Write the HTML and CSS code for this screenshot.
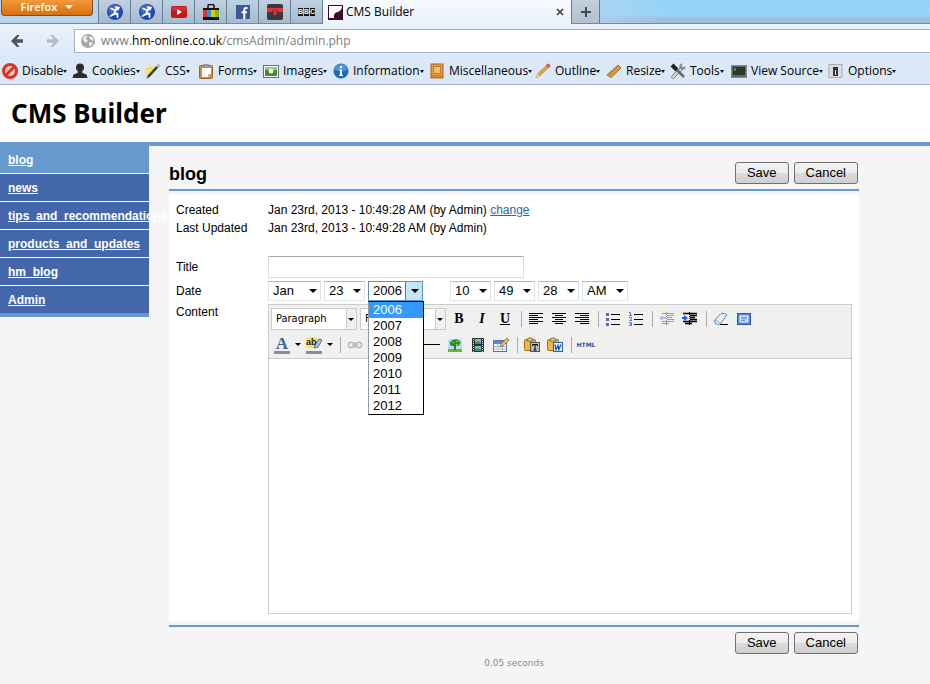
FILE: index.html
```html
<!DOCTYPE html>
<html lang="en">
<head>
<meta charset="utf-8">
<title>CMS Builder</title>
<link rel="stylesheet" href="styles.css">
</head>
<body>
<div class="browser">
  <div class="tabstrip">
    <button class="firefox" type="button">Firefox <i class="tri light"></i></button>
    <div class="tabs">
      <button class="tab" type="button" aria-label="Pinned tab"><svg width="16" height="16" viewBox="0 0 16 16"><circle cx="8" cy="8" r="8" fill="#2447ae"/><circle cx="7" cy="6" r="5.5" fill="#4268c9"/><path d="M4 4.500l3.500 1.500 4-1M8.500 6.500L7 10l-3.500 2M7.500 9.500l3 .5 0 3M9 6l3-2.500" stroke="#fff" stroke-width="1.800" fill="none" stroke-linecap="round"/><circle cx="9.500" cy="3.600" r="1.500" fill="#fff"/></svg></button>
      <button class="tab" type="button" aria-label="Pinned tab"><svg width="16" height="16" viewBox="0 0 16 16"><circle cx="8" cy="8" r="8" fill="#2447ae"/><circle cx="7" cy="6" r="5.500" fill="#4268c9"/><path d="M4 4.500l3.500 1.500 4-1M8.500 6.500L7 10l-3.500 2M7.500 9.500l3 .5 0 3M9 6l3-2.500" stroke="#fff" stroke-width="1.800" fill="none" stroke-linecap="round"/><circle cx="9.500" cy="3.600" r="1.500" fill="#fff"/></svg></button>
      <button class="tab" type="button" aria-label="Video"><svg width="16" height="16" viewBox="0 0 16 16"><rect y="2" width="16" height="12" rx="2" fill="#c4161c"/><rect x="1" y="3" width="14" height="4" fill="#cf3034"/><path d="M6 5l5 3-5 3z" fill="#fff"/></svg></button>
      <button class="tab" type="button" aria-label="Shopping"><svg width="16" height="16" viewBox="0 0 16 16"><path d="M5 5V2q0-1.500 1.500-1.500h3Q11 .5 11 2v3" fill="none" stroke="#111" stroke-width="1.500"/><path d="M0 4h16v12H0z" fill="#111"/><path d="M0 6h4v7H0z" fill="#e5322d"/><path d="M4 6h4v7H4z" fill="#1b9bd8"/><path d="M8 6h4v7H8z" fill="#f5c400"/><path d="M12 6h4v7h-4z" fill="#86b817"/></svg></button>
      <button class="tab" type="button" aria-label="Social"><svg width="16" height="16" viewBox="0 0 16 16"><rect x="1" y="1" width="14" height="14" fill="#3b5998"/><path d="M12.500 4H11q-1.700 0-1.700 2v9M6.500 8.200h5.500" stroke="#fff" stroke-width="2" fill="none"/></svg></button>
      <button class="tab" type="button" aria-label="Pinned site"><svg width="16" height="16" viewBox="0 0 16 16"><rect width="16" height="16" rx="2" fill="#3a3a3c"/><path d="M0 4h16v4h-5V6.500H9.500V11h-3V6.500H5V8H0z" fill="#e03039"/></svg></button>
      <button class="tab bbc" type="button"><b>B</b><b>B</b><b>C</b></button>
      <div class="tab active"><svg width="15" height="15" viewBox="0 0 15 15"><rect width="15" height="15" fill="#3d0a2c"/><path d="M1 1h13Q14 6 9.500 7T6 13H1z" fill="#fff"/></svg><span>CMS Builder</span><button class="close" type="button" aria-label="Close tab"><svg width="8" height="8" viewBox="0 0 8 8"><path d="M1 1l6 6M7 1L1 7" stroke="#444" stroke-width="1.700"/></svg></button></div>
      <button class="tab add" type="button" aria-label="New tab"><svg width="10" height="10" viewBox="0 0 10 10"><path d="M5 0v10M0 5h10" stroke="#3f4a56" stroke-width="2"/></svg></button>
    </div>
  </div>
  <div class="navbar">
    <button type="button" aria-label="Back"><svg width="14" height="14" viewBox="0 0 14 14"><path d="M7 1L1 7l6 6h2.500L6.500 8.800H13V5.200H6.500L9.500 1z" fill="#4c545c"/></svg></button>
    <button type="button" aria-label="Forward"><svg width="14" height="14" viewBox="0 0 14 14"><path d="M7 1l6 6-6 6H4.500l3-4.200H1V5.200h6.500L4.500 1z" fill="#b3bac1"/></svg></button>
    <div class="address"><svg width="14" height="14" viewBox="0 0 14 14"><circle cx="7" cy="7" r="7" fill="#a5a5a5"/><path d="M2 3.500L5.500 1l1 2-2 1.500 2.500 2L5 9 2.500 7zM8.500 2l3.500 1.500.8 3.500-2.800-1L8 4zM8 8l4 .5-2.500 4L8 11z" fill="#ececec"/></svg><span>www.<em>hm-online.co.uk</em>/cmsAdmin/admin.php</span></div>
  </div>
  <div class="devbar">
    <button type="button"><svg width="16" height="16" viewBox="0 0 16 16"><circle cx="8" cy="8" r="6.500" fill="#f7c9c2" stroke="#dd3322" stroke-width="3"/><path d="M3.500 12.500l9-9" stroke="#dd3322" stroke-width="3"/></svg>Disable<i class="tri"></i></button>
    <button type="button"><svg width="16" height="16" viewBox="0 0 16 16"><circle cx="8" cy="4.500" r="4" fill="#2c2c2c"/><path d="M6 7h4l.5 3 4 1.500 1 3.500H.5l1-3.500 4-1.500z" fill="#2c2c2c"/></svg>Cookies<i class="tri"></i></button>
    <button type="button"><svg width="16" height="16" viewBox="0 0 16 16"><path d="M5 0l1 4 4-1-2 3 4 2-4 1v4L5 10l-4 2 1-4-2-3 4 0z" fill="#fbe04a"/><path d="M2 15L14 2" stroke="#333" stroke-width="2.500"/><path d="M12 4l2.500-2.500M1 16l2-2" stroke="#bbb" stroke-width="2.500"/></svg>CSS<i class="tri"></i></button>
    <button type="button"><svg width="16" height="16" viewBox="0 0 16 16"><rect x="1.500" y="2.500" width="13" height="13" rx="1" fill="#d28a3c" stroke="#a8621c"/><path d="M4 5h9v6l-3 3H4z" fill="#fff"/><path d="M13 11h-3v3z" fill="#bbb"/><path d="M5 1h6v3H5z" fill="#999"/></svg>Forms<i class="tri"></i></button>
    <button type="button"><svg width="16" height="16" viewBox="0 0 16 16"><rect x=".5" y="2.500" width="15" height="12" fill="#fff" stroke="#667066"/><path d="M2 4h12v9H2z" fill="#3d8b37"/><path d="M2 4h12v3H2z" fill="#8ec4a0"/><circle cx="8" cy="8" r="2.500" fill="#f5f0b0"/></svg>Images<i class="tri"></i></button>
    <button type="button"><svg width="16" height="16" viewBox="0 0 16 16"><circle cx="8" cy="8" r="7.500" fill="#2068b4"/><path d="M1.500 7a6.500 6 0 0 1 13 0q-6 2-13 0" fill="#4a96de"/><path d="M7 3h2v2H7zM6 6.500h3V12h1v1H6v-1h1V7.500H6z" fill="#fff"/></svg>Information<i class="tri"></i></button>
    <button type="button"><svg width="16" height="16" viewBox="0 0 16 16"><rect x="2" y="1" width="12" height="14" fill="#e89c3c" stroke="#a8601c"/><rect x="4.500" y="3.500" width="7" height="7" fill="#f4bd6c" stroke="#c47a28"/><path d="M2 13h12" stroke="#b87020"/></svg>Miscellaneous<i class="tri"></i></button>
    <button type="button"><svg width="16" height="16" viewBox="0 0 16 16"><path d="M1 15l1.500-4L12 2l2 2-9.500 9z" fill="#f2a23c" stroke="#a8682c" stroke-width=".7"/><path d="M11 2l2-1.500q2 .5 2.500 2.500L14 5z" fill="#dc5148"/><path d="M1 15l1.500-4 2 2z" fill="#f6deb6"/></svg>Outline<i class="tri"></i></button>
    <button type="button"><svg width="16" height="16" viewBox="0 0 16 16"><path d="M1 12L12 2l3 3L5 14.500z" fill="#dd9848" stroke="#a5692c"/><path d="M4 10l1.500 1.500M6 8l1 1M8 6l1.500 1.500M10 4l1 1" stroke="#8c5520" stroke-width=".6"/></svg>Resize<i class="tri"></i></button>
    <button type="button"><svg width="16" height="16" viewBox="0 0 16 16"><path d="M3 14L12 5" stroke="#777" stroke-width="3.500" stroke-linecap="round"/><path d="M3 14L12 5" stroke="#ddd" stroke-width="2" stroke-linecap="round"/><path d="M12 1q-3 2-1 4t4-1" stroke="#888" stroke-width="2" fill="none"/><path d="M2 2l5 5" stroke="#222" stroke-width="4"/><path d="M7 7l7 7" stroke="#666" stroke-width="2.500"/></svg>Tools<i class="tri"></i></button>
    <button type="button"><svg width="16" height="16" viewBox="0 0 16 16"><rect x=".5" y="2.500" width="15" height="12" fill="#666" stroke="#888"/><rect x="2" y="4" width="12" height="8" fill="#253a25"/><path d="M3 5.500l2 1-2 1" stroke="#7fca6c" fill="none"/></svg>View Source<i class="tri"></i></button>
    <button type="button"><svg width="16" height="16" viewBox="0 0 16 16"><rect x="1" y="1.500" width="13" height="13" fill="#ddd" stroke="#aaa"/><rect x="5" y="4" width="5" height="9" fill="#333"/><path d="M7 7h1v5H7z" fill="#eee"/></svg>Options<i class="tri"></i></button>
  </div>
</div>

<header class="masthead"><h1>CMS Builder</h1></header>
<div class="layout">
  <nav class="sidebar">
    <a class="current" href="#">blog</a>
    <a href="#">news</a>
    <a href="#">tips_and_recommendations</a>
    <a href="#">products_and_updates</a>
    <a href="#">hm_blog</a>
    <a href="#">Admin</a>
  </nav>
  <main class="content">
    <div class="bar top"><h2>blog</h2><button class="btn" type="button">Save</button><button class="btn" type="button">Cancel</button></div>
    <form class="panel">
      <dl class="facts">
        <dt>Created</dt><dd>Jan 23rd, 2013 - 10:49:28 AM (by Admin) <a href="#">change</a></dd>
        <dt>Last Updated</dt><dd>Jan 23rd, 2013 - 10:49:28 AM (by Admin)</dd>
      </dl>
      <div class="fields">
        <label for="title">Title</label>
        <input class="title" id="title" type="text">
        <label for="month">Date</label>
        <div class="date">
          <span class="pick month"><select id="month"><option>Jan</option></select></span>
          <span class="pick"><select aria-label="Day"><option>23</option></select></span>
          <span class="pick year"><select aria-label="Year"><option>2006</option></select>
            <ul class="menu"><li class="on">2006</li><li>2007</li><li>2008</li><li>2009</li><li>2010</li><li>2011</li><li>2012</li></ul>
          </span>
          <span class="pick"><select aria-label="Hour"><option>10</option></select></span>
          <span class="pick"><select aria-label="Minute"><option>49</option></select></span>
          <span class="pick"><select aria-label="Second"><option>28</option></select></span>
          <span class="pick half"><select aria-label="AM or PM"><option>AM</option></select></span>
        </div>
        <label class="tall" for="body">Content</label>
        <div class="editor">
          <div class="tools">
            <div class="row">
              <span class="style"><select aria-label="Format"><option>Paragraph</option></select></span>
              <span class="style"><select aria-label="Font"><option>Font family</option></select></span>
              <button class="tool" type="button"><b>B</b></button>
              <button class="tool" type="button"><b><em>I</em></b></button>
              <button class="tool" type="button"><b><u>U</u></b></button>
              <i class="sep"></i>
              <button class="tool" type="button" aria-label="Align left"><svg width="16" height="16" viewBox="0 0 16 16"><path d="M1 2.500h14M1 4.500h9M1 6.500h14M1 8.500h9M1 10.500h14M1 12.500h9" stroke="#000"/></svg></button>
              <button class="tool" type="button" aria-label="Align center"><svg width="16" height="16" viewBox="0 0 16 16"><path d="M1 2.500h14M4 4.500h8M1 6.500h14M4 8.500h8M1 10.500h14M4 12.500h8" stroke="#000"/></svg></button>
              <button class="tool" type="button" aria-label="Align right"><svg width="16" height="16" viewBox="0 0 16 16"><path d="M1 2.500h14M6 4.500h9M1 6.500h14M6 8.500h9M1 10.500h14M6 12.500h9" stroke="#000"/></svg></button>
              <i class="sep"></i>
              <button class="tool" type="button" aria-label="Bullets"><svg width="16" height="16" viewBox="0 0 16 16"><path d="M6 3.500h9M6 8.500h9M6 13.500h9" stroke="#000"/><path d="M1 2h3v3H1zM1 7h3v3H1zM1 12h3v3H1z" fill="#4a6fb5"/></svg></button>
              <button class="tool" type="button" aria-label="Numbering"><svg width="16" height="16" viewBox="0 0 16 16"><path d="M6 3.500h9M6 8.500h9M6 13.500h9" stroke="#000"/><path d="M1 1.500h1.500v3M1 4.500h3M1 6.500h2.500v1.500L1.500 9.500H4M1 11.500h2.500v3H1M1.500 13h2" stroke="#4a78d8" fill="none"/></svg></button>
              <i class="sep"></i>
              <button class="tool faded" type="button" aria-label="Outdent"><svg width="16" height="16" viewBox="0 0 16 16"><path d="M3 2.500h12M8 4.500h7M8 6.500h5M8 8.500h7M3 10.500h12M3 12.500h7" stroke="#000"/><path d="M7.500 1v14" stroke="#000" stroke-dasharray="1 1"/><path d="M0 7l4-3v2h3v2H4v2z" fill="#3a66e0"/></svg></button>
              <button class="tool" type="button" aria-label="Indent"><svg width="16" height="16" viewBox="0 0 16 16"><path d="M1 2.500h14M8 4.500h7M8 6.500h5M8 8.500h7M1 10.500h14M3 12.500h7" stroke="#000" stroke-width="1.300"/><path d="M7.500 1v14" stroke="#000" stroke-dasharray="1 1"/><path d="M6 7L2 4v2H0v2h2v2z" fill="#2857e8"/></svg></button>
              <i class="sep"></i>
              <button class="tool" type="button" aria-label="Remove formatting"><svg width="16" height="16" viewBox="0 0 16 16"><path d="M1.500 9.500L8 2.500q3.500-1 6 1.500L8 12q-1 1.500-3.500 1.500Q.5 12 1.500 9.500z" fill="#e6effa" stroke="#5f7fa8"/><path d="M2 9.500q3 0 5.500 3" stroke="#8fa9c8" fill="none"/><path d="M7 13.500h8" stroke="#000"/></svg></button>
              <button class="tool" type="button" aria-label="Fullscreen"><svg width="16" height="16" viewBox="0 0 16 16"><rect x="1.500" y="2.500" width="13" height="11" fill="#5d87ee" stroke="#2f5499"/><rect x="3.500" y="4.500" width="9" height="7" fill="#dbe8ff"/><path d="M5 6.500h6M5 8h6M5 9.500h4" stroke="#5d87ee"/></svg></button>
            </div>
            <div class="row">
              <button class="tool wide" type="button" aria-label="Text color"><svg width="31" height="20" viewBox="0 0 31 20"><text class="glyph-a" x="11" y="14" text-anchor="middle">A</text><path d="M3 16h16v3H3z" fill="#8c8c8c"/><path d="M24 8h6l-3 3z" fill="#000"/></svg></button>
              <button class="tool wide" type="button" aria-label="Highlight color"><svg width="31" height="20" viewBox="0 0 31 20"><rect x="3" y="2" width="12" height="11" rx="3" fill="#fbe36a"/><path d="M11 13l1-3 4-6 3 1-4 7z" fill="#a9c8e8" stroke="#50709a"/><text class="glyph-ab" x="3" y="10">ab</text><path d="M3 16h16v3H3z" fill="#8c8c8c"/><path d="M24 8h6l-3 3z" fill="#000"/></svg></button>
              <i class="sep"></i>
              <button class="tool faded" type="button" aria-label="Link"><svg width="16" height="16" viewBox="0 0 16 16"><rect x="1.500" y="5.500" width="6" height="5" rx="2" fill="none" stroke="#456" stroke-width="1.500"/><rect x="8.500" y="5.500" width="6" height="5" rx="2" fill="none" stroke="#456" stroke-width="1.500"/><path d="M5 8h6" stroke="#456" stroke-width="1.500"/></svg></button>
              <button class="tool faded" type="button" aria-label="Unlink"></button>
              <i class="sep"></i>
              <button class="tool" type="button" aria-label="Anchor"></button>
              <button class="tool" type="button" aria-label="Horizontal rule"><svg width="16" height="16" viewBox="0 0 16 16"><path d="M0 7.500h16" stroke="#000"/></svg></button>
              <button class="tool" type="button" aria-label="Image"><svg width="16" height="16" viewBox="0 0 16 16"><rect x="1" y="2" width="14" height="13" fill="#b8ddff"/><path d="M1 12h14v3H1z" fill="#68b82e"/><path d="M7 8h2v5H7z" fill="#8a5524"/><path d="M3 7q-1-2 1.500-3 1-2 3.500-1.500 3-1 4 1.500 2.500 1 1 3-1 2.500-3.500 1.500Q8 10.500 6 9 3 9.500 3 7z" fill="#2e8b22"/><path d="M5 5h2v1H5zM9 4h2v1H9zM9 7h2v1H9z" fill="#7fd04e"/></svg></button>
              <button class="tool" type="button" aria-label="Media"><svg width="16" height="16" viewBox="0 0 16 16"><rect x="2" y="1" width="12" height="14" fill="#333"/><path d="M5 2h6v5H5zM5 9h6v5H5z" fill="#80b8e4"/><path d="M5 5l3-1 3 2v1H5zM5 12l3-1 3 2v1H5z" fill="#3e9a3e"/><path d="M3.500 2v13M12.500 2v13" stroke="#ddd" stroke-dasharray="1 1"/></svg></button>
              <button class="tool" type="button" aria-label="Table"><svg width="16" height="16" viewBox="0 0 16 16"><rect x=".5" y="3.500" width="13" height="11" fill="#fff" stroke="#5578a8"/><path d="M1 4h12v3H1z" fill="#5c8ad0"/><path d="M1 9.500h12M1 12h12M5 7v7M9.500 7v7" stroke="#9db6d8"/><path d="M7 10l1-3 6-6 2 2-6 6z" fill="#e8b86c" stroke="#8a5a28" stroke-width=".7"/></svg></button>
              <i class="sep"></i>
              <button class="tool" type="button" aria-label="Paste as plain text"><svg width="16" height="16" viewBox="0 0 16 16"><rect x=".5" y="2.500" width="11" height="11" rx="1" fill="#eeb93c" stroke="#9a7020"/><path d="M3 3q0-2 3-2t3 2v1H3z" fill="#e8d9a0" stroke="#806020"/><rect x="6.500" y="5.500" width="9" height="9" fill="#bbb" stroke="#555"/><path d="M8.500 9V7.500h5V9M11 7.500v5.500M9.500 13h3" stroke="#000" fill="none"/></svg></button>
              <button class="tool" type="button" aria-label="Paste from Word"><svg width="16" height="16" viewBox="0 0 16 16"><rect x=".5" y="2.500" width="11" height="11" rx="1" fill="#eeb93c" stroke="#9a7020"/><path d="M3 3q0-2 3-2t3 2v1H3z" fill="#e8d9a0" stroke="#806020"/><rect x="6.500" y="5.500" width="9" height="9" fill="#e4efff" stroke="#2f5fae"/><path d="M8 7.500l1 5 2-4 .8 4 2.200-5" stroke="#1d55b4" stroke-width="1.300" fill="none"/></svg></button>
              <i class="sep"></i>
              <button class="tool html" type="button">HTML</button>
            </div>
          </div>
          <textarea id="body"></textarea>
        </div>
      </div>
    </form>
    <div class="bar bottom"><button class="btn" type="button">Save</button><button class="btn" type="button">Cancel</button></div>
    <p class="timing">0.05 seconds</p>
  </main>
</div>
</body>
</html>
```
FILE: styles.css
```css
* { box-sizing: border-box; }
body {
  margin: 0;
  min-height: 100vh;
  background: #f5f5f5;
  color: #000;
  font: 12px/18px "Liberation Sans", Arial, sans-serif;
}
button, select, input, textarea { font: inherit; color: inherit; margin: 0; border-radius: 0; }
button { padding: 0; border: 0; background: none; white-space: nowrap; }
svg { display: block; flex: none; }
h1, h2, p, dl, dd { margin: 0; }

/* browser frame */
.browser { font-family: "Open Sans", "Noto Sans", sans-serif; }
.tabstrip {
  display: flex;
  height: 24px;
  gap: 5px;
  padding-left: 1px;
  border-bottom: 1px solid #75889f;
  background: linear-gradient(90deg, #b9d3ec 0, #b9d3ec 60%, transparent 72%),
    linear-gradient(#93d3f8 0, #98d5fa 60%, #9fbddd 85%);
}
.firefox {
  width: 92px;
  height: 16px;
  display: flex;
  justify-content: center;
  align-items: center;
  gap: 8px;
  padding-bottom: 2px;
  border: 1px solid #8a4a16;
  border-top: 0;
  border-radius: 0 0 4px 4px;
  background: linear-gradient(#ef9a3c, #d9700f);
  color: #fff;
  font-size: 11px;
  line-height: 13px;
  font-weight: 600;
}
.tri { border: 2px solid transparent; border-top: 3px solid #111; border-bottom: 0; }
.tri.light { border-width: 4px 4px 0; border-top-color: #fff; }
.tabs { display: flex; flex: 1; border-left: 1px solid #667c94; height: 23px; }
.tab {
  width: 32px;
  height: 23px;
  display: flex;
  align-items: center;
  justify-content: center;
  border-right: 1px solid #667c94;
  background: linear-gradient(#bfd0e1, #a6bace);
}
.tab.active {
  width: 249px;
  height: 24px;
  justify-content: flex-start;
  gap: 3px;
  padding: 0 7px 0 5px;
  background: linear-gradient(#f7faff, #eaf2fb);
}
.tab.active span { flex: 1; }
.tab.add { width: 28px; background: linear-gradient(#c3cfdb, #b2c0cf); }
.bbc { gap: 1px; }
.bbc b { width: 5px; background: #111; color: #fff; font: bold 7px/8px "Liberation Sans", sans-serif; }
.navbar {
  display: flex;
  align-items: center;
  height: 33px;
  padding-left: 10px;
  background: linear-gradient(#eaf2fb, #dce9f7);
}
.navbar button + button { margin-left: 22px; }
.address {
  flex: 1;
  display: flex;
  align-items: center;
  gap: 6px;
  height: 24px;
  margin-left: 14px;
  padding-left: 6px;
  border: 1px solid #a3b3c9;
  border-right: 0;
  background: #fff;
  color: #7d7d7d;
}
.address em { font-style: normal; color: #000; }
.devbar {
  display: grid;
  grid-template-columns: 70px 73px 53px 65px 70px 96px 106px 71px 64px 61px 97px auto;
  height: 28px;
  padding: 1px 0 0 2px;
  border-bottom: 1px solid #a4b2c8;
  background: #dbe8f7;
}
.devbar button { display: flex; align-items: center; }
.devbar svg { margin-right: 4px; }

/* page frame */
.masthead { padding: 12px 11px; border-bottom: 4px solid #6699cc; background: #fff; }
h1 { font: bold 26px/33px "Noto Sans", Tahoma, sans-serif; }
.layout { display: flex; align-items: flex-start; }
.sidebar { flex: 0 0 149px; width: 149px; border-bottom: 4px solid #6699cc; }
.sidebar a {
  display: block;
  height: 28px;
  padding: 0 8px;
  border-bottom: 1px solid #fff;
  background: #4466aa;
  color: #fff;
  font-weight: bold;
  line-height: 28px;
}
.sidebar a.current { background: #6699cc; }
.sidebar a:last-child { border-bottom: 0; height: 27px; }
.content { flex: 1; min-width: 0; padding: 16px 71px 0 20px; }
.bar { display: flex; justify-content: flex-end; gap: 5px; padding-right: 1px; }
.bar.top { padding-bottom: 5px; border-bottom: 2px solid #6699cc; }
.bar.bottom { margin-top: 4px; padding-top: 5px; border-top: 2px solid #6699cc; }
h2 { flex: 1; font-size: 18px; line-height: 24px; height: 22px; }
.btn {
  height: 22px;
  padding: 0 11px;
  border: 1px solid #707070;
  border-radius: 3px;
  background: linear-gradient(#f3f3f3 0, #ebebeb 50%, #dcdcdc 50%, #cfcfcf);
  font-size: 13px;
  line-height: 20px;
}
.timing {
  color: #888;
  font: 9px/18px "DejaVu Sans", Verdana, sans-serif;
  text-align: center;
}

/* record form */
.panel { margin-top: 4px; padding: 6px 7px 7px; background: #fff; }
.facts, .fields { display: grid; grid-template-columns: 92px 1fr; }
.facts a { color: #336699; }
.fields { margin-top: 19px; row-gap: 3px; align-items: center; }
.fields .tall { align-self: start; line-height: 16px; }
.title { width: 256px; height: 22px; border: 1px solid #dcdcdc; border-top-color: #aaa; }
.date { display: flex; gap: 3px; }
.pick, .style { position: relative; display: grid; align-items: center; }
.pick { width: 41px; height: 20px; font-size: 13px; }
.pick.month { width: 53px; }
.pick.half { width: 46px; }
.pick.year { width: 55px; margin-right: 24px; }
.pick::after, .style::after {
  content: "";
  grid-area: 1 / 1;
  justify-self: end;
  margin-right: 4px;
  border: 4px solid transparent;
  border-top-color: #000;
  border-bottom: 0;
  pointer-events: none;
}
.pick select, .style select {
  grid-area: 1 / 1;
  appearance: none;
  width: 100%;
  height: 100%;
  padding: 0 4px;
  border: 1px solid #dfe2e6;
  border-top-color: #b5b5b5;
  background: #fff;
}
.pick.year select {
  border-color: #5795c4;
  background: linear-gradient(90deg, #fff 36px, #3c7fb1 36px, #3c7fb1 37px, #c4e5f6 37px);
}
.menu {
  position: absolute;
  top: 20px;
  left: 0;
  z-index: 1;
  width: 56px;
  margin: 0;
  padding: 0;
  list-style: none;
  border: 1px solid #000;
  border-left-color: #999;
  background: #fff;
  line-height: 16px;
}
.menu li { padding-left: 4px; }
.menu .on { background: #3399ff; color: #fff; }

/* rich text editor */
.editor { border: 1px solid #ccc; background: #fff; }
.tools { padding: 1px 2px 0; border-bottom: 1px solid #ccc; background: #f0f0ee; }
.row { display: flex; align-items: center; gap: 3px; height: 26px; }
.style { width: 86px; height: 22px; font: 11px/18px "DejaVu Sans Condensed", Tahoma, sans-serif; }
.style select { padding: 0 4px; border-color: #ccc; background: linear-gradient(90deg, #fff 74px, #ccc 74px, #ccc 75px, #f0f0ee 75px); }
.style::after { margin-right: 3px; border-width: 3px 3px 0; }
.tool {
  width: 20px;
  height: 20px;
  display: flex;
  align-items: center;
  justify-content: center;
  font: 14px/20px "Liberation Serif", serif;
}
.tool.wide { width: 31px; }
.tool.wide + .tool.wide { margin-left: -2px; }
.tool.faded { opacity: .35; }
.tool.html { color: #2b50a8; font: bold 6px/20px "DejaVu Sans", sans-serif; }
.glyph-a { font: bold 17px "Liberation Serif", serif; fill: #3f5f9f; }
.glyph-ab { font: bold 9px "Liberation Sans", sans-serif; fill: #222; }
.sep { width: 5px; height: 16px; background: linear-gradient(90deg, transparent 3px, #aaa 3px, #aaa 4px, transparent 4px); }
textarea { display: block; width: 100%; height: 254px; border: 0; background: #fff; resize: none; }
```
